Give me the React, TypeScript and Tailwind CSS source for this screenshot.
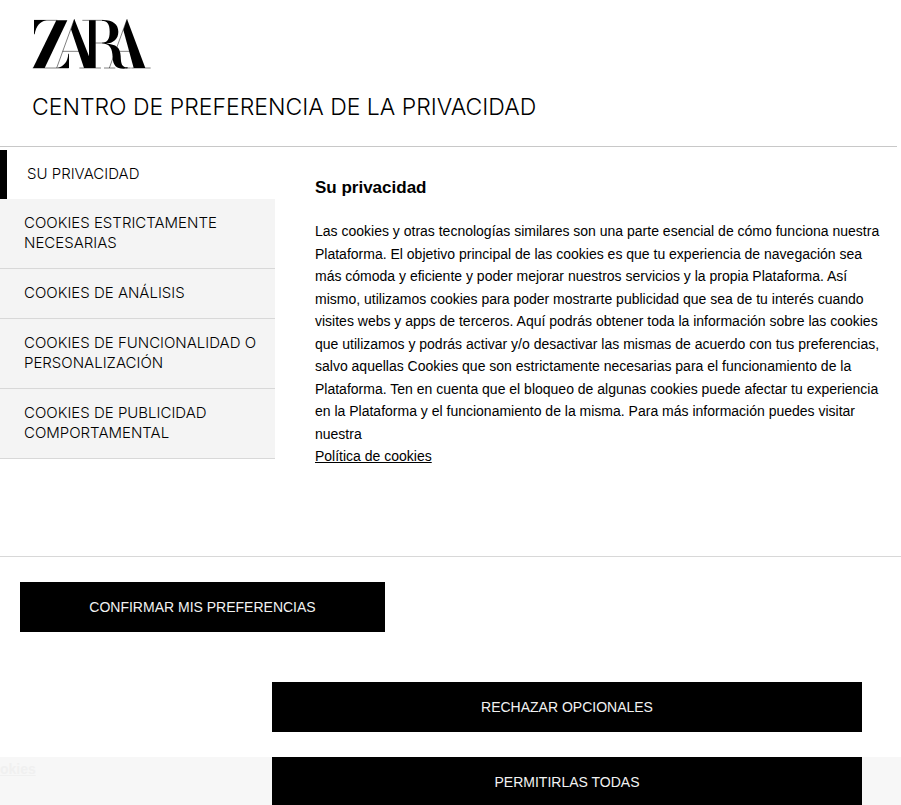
import { useState } from "react";

const tabs = [
  "Su privacidad",
  "Cookies estrictamente necesarias",
  "Cookies de análisis",
  "Cookies de funcionalidad o personalización",
  "Cookies de publicidad comportamental",
];

function Logo() {
  return (
    <svg
      viewBox="36 27 360 150"
      className="block h-[50px] w-[120px] text-black"
      fill="currentColor"
      role="img"
      aria-label="Zara"
    >
      <path d="M109 31H142L74 174H39Z" />
      <path d="M42 30H80C60 34 48 48 44 73H42Z" />
      <path d="M147 131V174H112C132 168 143 156 145 131Z" />
      <path d="M163 27L207 139V31H227V174H192L153 58Z" />
      <path d="M246 30C278 29 295 43 295 65C295 87 280 99 258 101C289 102 301 113 302 138C303 162 305 172 323 172V175C292 180 279 168 278 143C277 115 270 102 246 100V98C262 97 269 88 269 65C269 42 262 33 246 32Z" />
      <path d="M321 27L376 174H341L310 60Z" />
      <g fill="none" stroke="currentColor" strokeWidth="1.5">
        <path d="M42 31H112M38 174H146M163 28L110 174M128 124H182" />
        <path d="M187 31H250M226 99H260M178 174H243" />
        <path d="M321 28L268 174M300 124H350M252 174H286M318 174H332M334 174H392" />
      </g>
    </svg>
  );
}

const buttonClass =
  "block h-[50px] cursor-pointer bg-black text-center text-sm uppercase text-[#f2f2f2]";

export default function App() {
  const [active, setActive] = useState(0);

  return (
    <div className="flex h-screen flex-col overflow-hidden bg-white font-['Liberation_Sans',Arial,sans-serif] text-black">
      <header className="mr-1 border-b border-[#c8c8c8] px-8 pt-[19px] pb-[22px]">
        <Logo />
        <h1 className="mt-[21px] font-[Inter,'Liberation_Sans',sans-serif] text-[23px] leading-[34px] font-light uppercase">
          Centro de preferencia de la privacidad
        </h1>
      </header>

      <main className="flex min-h-[410px] shrink-0 border-b border-[#d8d8d8] pt-[3px]">
        <nav className="w-[275px] shrink-0" aria-label="Categorías de cookies">
          {tabs.map((tab, i) => (
            <button
              key={tab}
              type="button"
              onClick={() => setActive(i)}
              aria-pressed={active === i}
              className={
                "block w-full cursor-pointer pt-3.5 pr-4 pb-[15px] text-left font-[Inter,'Liberation_Sans',sans-serif] text-[15px] leading-5 font-light uppercase " +
                (active === i
                  ? "border-l-[7px] border-black bg-white pl-5"
                  : "border-b border-[#d8d8d8] bg-[#f4f4f4] pl-6")
              }
            >
              {tab}
            </button>
          ))}
        </nav>

        <section className="min-w-0 flex-1 pt-6 pr-5 pl-10">
          <h2 className="text-[17px] leading-7 font-bold">Su privacidad</h2>
          <p className="mt-[18px] text-sm leading-[1.61]">
            Las cookies y otras tecnologías similares son una parte esencial de cómo funciona
            nuestra Plataforma. El objetivo principal de las cookies es que tu experiencia de
            navegación sea más cómoda y eficiente y poder mejorar nuestros servicios y la propia
            Plataforma. Así mismo, utilizamos cookies para poder mostrarte publicidad que sea de tu
            interés cuando visites webs y apps de terceros. Aquí podrás obtener toda la información
            sobre las cookies que utilizamos y podrás activar y/o desactivar las mismas de acuerdo
            con tus preferencias, salvo aquellas Cookies que son estrictamente necesarias para el
            funcionamiento de la Plataforma. Ten en cuenta que el bloqueo de algunas cookies puede
            afectar tu experiencia en la Plataforma y el funcionamiento de la misma. Para más
            información puedes visitar nuestra
            <br />
            <a href="#politica" className="underline">
              Política de cookies
            </a>
          </p>
        </section>
      </main>

      <footer className="shrink-0 pt-[25px]">
        <button type="button" className={buttonClass + " ml-5 w-[365px]"}>
          Confirmar mis preferencias
        </button>
        <div className="mt-[50px] flex pr-[39px] pl-[272px]">
          <button type="button" className={buttonClass + " flex-1"}>
            Rechazar opcionales
          </button>
        </div>
        <div className="mt-[25px] flex bg-[#f7f7f7] pr-[39px]">
          <div className="w-[272px] shrink-0">
            <a href="#cookies" className="text-sm leading-6 font-bold text-[#f0f0f0] underline">
              okies
            </a>
          </div>
          <button type="button" className={buttonClass + " flex-1"}>
            Permitirlas todas
          </button>
        </div>
      </footer>
    </div>
  );
}
